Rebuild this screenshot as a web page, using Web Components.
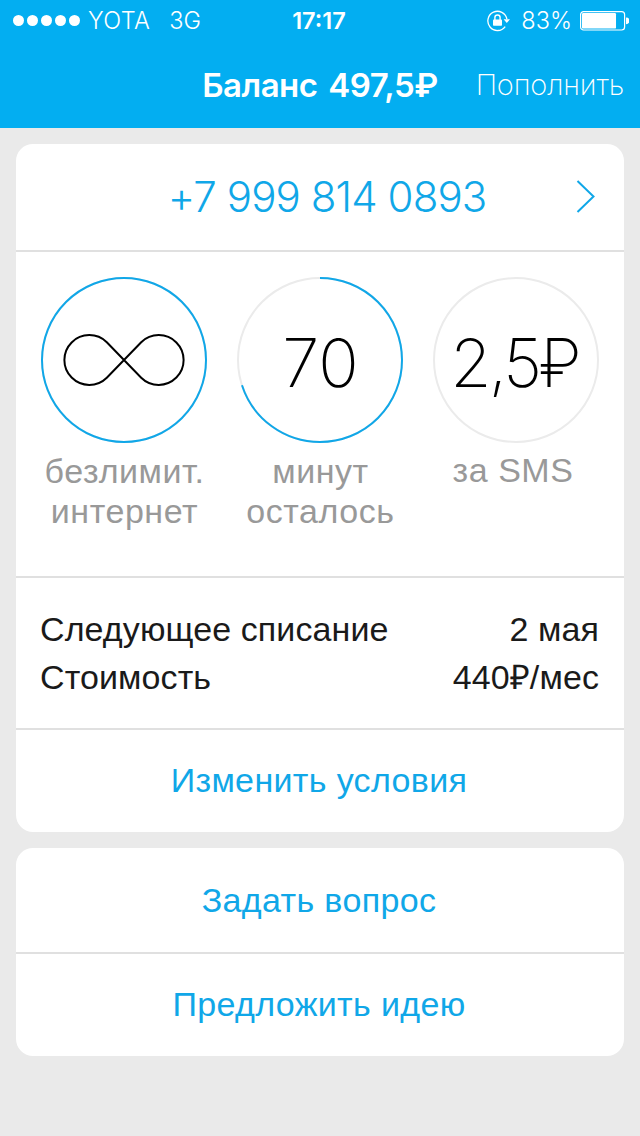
<!DOCTYPE html>
<html lang="ru">
<head>
<meta charset="utf-8">
<title>Баланс</title>
<style>
    html, body {
        margin: 0;
        padding: 0;
    }

    body {
        width: 640px;
        min-height: 1136px;
        background: #eaeaea;
        font-family: "Liberation Sans", Arial, sans-serif;
        font-size: 34px;
        color: #1a1a1a;
        --accent: #10a7e8;
        --bar: #03aef1;
        --line: #e0e0e0;
        --thin: Inter, "Liberation Sans", sans-serif;
    }

    main {
        display: flex;
        flex-direction: column;
        gap: 16px;
        padding: 16px;
    }
</style>
</head>
<body>
<status-bar carrier="YOTA" network="3G" time="17:17" battery="83"></status-bar>
<nav-bar>Баланс 497,5₽<span slot="action">Пополнить</span></nav-bar>
<main>
    <info-card>
        <phone-row>+7 999 814 0893</phone-row>
        <usage-panel>
            <usage-ring value="100">
                <infinity-icon></infinity-icon>
                <span slot="label">безлимит.<br>интернет</span>
            </usage-ring>
            <usage-ring value="70">70<span slot="label">минут<br>осталось</span></usage-ring>
            <usage-ring value="0" price>2,5₽<span slot="label">за SMS</span></usage-ring>
        </usage-panel>
        <detail-list>
            <detail-row name="Следующее списание">2 мая</detail-row>
            <detail-row name="Стоимость">440₽/мес</detail-row>
        </detail-list>
        <action-row>Изменить условия</action-row>
    </info-card>
    <info-card>
        <action-row>Задать вопрос</action-row>
        <action-row>Предложить идею</action-row>
    </info-card>
</main>

<script>
// Базовый класс: шаблон кладём в Shadow DOM
class BaseElement extends HTMLElement {
    constructor() {
        super();
        this.shadow = this.attachShadow({ mode: 'open' });
    }

    connectedCallback() {
        this.shadow.innerHTML = this.template();
    }
}

class StatusBar extends BaseElement {
    template() {
        const level = Number(this.getAttribute('battery'));
        return `
            <style>
                :host {
                    display: grid;
                    grid-template-columns: 1fr auto 1fr;
                    align-items: center;
                    box-sizing: border-box;
                    height: 40px;
                    padding: 1px 11px 0 13px;
                    background: var(--bar);
                    color: #fff;
                    font: 300 23.5px/38px var(--thin);
                }
                .left, .right {
                    display: flex;
                    align-items: center;
                }
                .right {
                    justify-content: flex-end;
                }
                .dots {
                    display: flex;
                    gap: 3px;
                    margin-right: 8px;
                }
                .dots i {
                    width: 11px;
                    height: 11px;
                    border-radius: 50%;
                    background: #fff;
                }
                .carrier {
                    letter-spacing: 0.4px;
                }
                .network {
                    margin-left: 19px;
                }
                .time {
                    margin-right: 4px;
                    font-weight: 600;
                }
                .lock {
                    margin-right: 11px;
                }
                .percent {
                    margin-right: 8px;
                }
                svg {
                    display: block;
                }
            </style>
            <div class="left">
                <div class="dots"><i></i><i></i><i></i><i></i><i></i></div>
                <span class="carrier">${this.getAttribute('carrier')}</span>
                <span class="network">${this.getAttribute('network')}</span>
            </div>
            <span class="time">${this.getAttribute('time')}</span>
            <div class="right">
                <svg class="lock" width="23" height="22" viewBox="0 0 23 22">
                    <path d="M18.2 16.6A9.6 9.6 0 1 1 19.9 9.2" fill="none" stroke="#fff" stroke-width="1.3"/>
                    <path d="M16.6 9.2H23l-3.2 3.8z" fill="#fff"/>
                    <rect x="6" y="9.4" width="9" height="6.4" rx=".8" fill="#fff"/>
                    <path d="M7.9 10V7.6a2.6 2.6 0 0 1 5.2 0V10" fill="none" stroke="#fff" stroke-width="1.4"/>
                </svg>
                <span class="percent">${level}%</span>
                <svg width="49" height="20" viewBox="0 0 49 20">
                    <rect x=".6" y=".6" width="44" height="18.4" rx="3" fill="none" stroke="#fff" stroke-width="1.2"/>
                    <rect x="2" y="2" width="${41 * level / 100}" height="15.6" rx="1.2" fill="#fff"/>
                    <path d="M46 6.4a3.4 3.4 0 0 1 0 6.8z" fill="#fff"/>
                </svg>
            </div>
        `;
    }
}

class NavBar extends BaseElement {
    template() {
        return `
            <style>
                :host {
                    display: grid;
                    grid-template-columns: 1fr auto 1fr;
                    align-items: center;
                    box-sizing: border-box;
                    height: 88px;
                    padding: 1px 16px 0;
                    background: var(--bar);
                    color: #fff;
                    font: 600 33px/86px var(--thin);
                    letter-spacing: -0.5px;
                    word-spacing: 3px;
                    white-space: nowrap;
                }
                .title {
                    grid-column: 2;
                }
                .action {
                    justify-self: end;
                    padding-top: 1px;
                    font-size: 29px;
                    font-weight: 200;
                    letter-spacing: -0.15px;
                }
            </style>
            <span class="title"><slot></slot></span>
            <span class="action"><slot name="action"></slot></span>
        `;
    }
}

class InfoCard extends BaseElement {
    template() {
        return `
            <style>
                :host {
                    display: block;
                    border-radius: 17px;
                    background: #fff;
                    overflow: hidden;
                }
                ::slotted(:not(:first-child)) {
                    border-top: 2px solid var(--line);
                }
            </style>
            <slot></slot>
        `;
    }
}

class PhoneRow extends BaseElement {
    template() {
        return `
            <style>
                :host {
                    display: grid;
                    grid-template-columns: 1fr auto 1fr;
                    align-items: center;
                    height: 106px;
                    padding: 0 28px 0 42px;
                    color: var(--accent);
                    font: 300 42px/106px var(--thin);
                    font-feature-settings: "calt" 0;
                    letter-spacing: -0.9px;
                }
                .number {
                    grid-column: 2;
                }
                svg {
                    justify-self: end;
                }
            </style>
            <span class="number"><slot></slot></span>
            <svg width="20" height="34" viewBox="0 0 20 34">
                <path d="M1.5 1L17.5 16.5L1.5 32" fill="none" stroke="currentColor" stroke-width="2"/>
            </svg>
        `;
    }
}

class UsagePanel extends BaseElement {
    template() {
        return `
            <style>
                :host {
                    display: grid;
                    grid-template-columns: repeat(3, 196px);
                    box-sizing: border-box;
                    height: 326px;
                    padding: 25px 10px 0;
                }
            </style>
            <slot></slot>
        `;
    }
}

class UsageRing extends BaseElement {
    template() {
        const value = Number(this.getAttribute('value'));
        // Дуга остатка рисуется по часовой стрелке от верхней точки
        const arc = value > 0
            ? `<circle class="arc" cx="83" cy="83" r="82" pathLength="100" stroke-dasharray="${value} ${100 - value}" transform="rotate(-90 83 83)"/>`
            : '';
        return `
            <style>
                :host {
                    display: flex;
                    flex-direction: column;
                    align-items: center;
                }
                .ring {
                    display: grid;
                    place-items: center;
                    width: 166px;
                    height: 166px;
                }
                .ring > * {
                    grid-area: 1 / 1;
                }
                circle {
                    fill: none;
                    stroke: #ebebeb;
                    stroke-width: 2;
                }
                .arc {
                    stroke: var(--accent);
                }
                .value {
                    padding: 5px 0 0 1px;
                    font: 200 67px/80px var(--thin);
                    color: #000;
                    white-space: nowrap;
                }
                .label {
                    margin-top: 8px;
                    padding-left: 1px;
                    line-height: 40px;
                    letter-spacing: 0.55px;
                    text-align: center;
                    color: #999;
                }
                ::slotted(infinity-icon) {
                    margin: -6px 0 0 -1px;
                }
                :host([price]) .value {
                    padding-right: 4px;
                    letter-spacing: -3px;
                }
                :host([price]) .label {
                    margin-top: 7px;
                    padding-right: 7px;
                }
            </style>
            <div class="ring">
                <svg width="166" height="166" viewBox="0 0 166 166">
                    <circle cx="83" cy="83" r="82"/>
                    ${arc}
                </svg>
                <span class="value"><slot></slot></span>
            </div>
            <div class="label"><slot name="label"></slot></div>
        `;
    }
}

class InfinityIcon extends BaseElement {
    template() {
        return `
            <style>
                :host, svg {
                    display: block;
                }
            </style>
            <svg width="122" height="54" viewBox="0 0 122 54">
                <path d="M43.8 9.3A24.9 24.9 0 1 0 43.8 44.7L78.2 9.3A24.9 24.9 0 1 1 78.2 44.7Z"
                    fill="none" stroke="#000" stroke-width="2"/>
            </svg>
        `;
    }
}

class DetailList extends BaseElement {
    template() {
        return `
            <style>
                :host {
                    display: block;
                    box-sizing: border-box;
                    height: 152px;
                    padding: 27px 25px 0 24px;
                }
            </style>
            <slot></slot>
        `;
    }
}

class DetailRow extends BaseElement {
    template() {
        return `
            <style>
                :host {
                    display: flex;
                    justify-content: space-between;
                    line-height: 48px;
                    letter-spacing: 0.1px;
                }
            </style>
            <span>${this.getAttribute('name')}</span>
            <span><slot></slot></span>
        `;
    }
}

class ActionRow extends BaseElement {
    template() {
        return `
            <style>
                :host {
                    display: block;
                    height: 102px;
                    padding-right: 2px;
                    line-height: 101px;
                    letter-spacing: 0.35px;
                    text-align: center;
                    color: var(--accent);
                }
                :host(:first-child) {
                    height: 104px;
                    line-height: 104px;
                }
            </style>
            <slot></slot>
        `;
    }
}

customElements.define('status-bar', StatusBar);
customElements.define('nav-bar', NavBar);
customElements.define('info-card', InfoCard);
customElements.define('phone-row', PhoneRow);
customElements.define('usage-panel', UsagePanel);
customElements.define('usage-ring', UsageRing);
customElements.define('infinity-icon', InfinityIcon);
customElements.define('detail-list', DetailList);
customElements.define('detail-row', DetailRow);
customElements.define('action-row', ActionRow);
</script>
</body>
</html>
